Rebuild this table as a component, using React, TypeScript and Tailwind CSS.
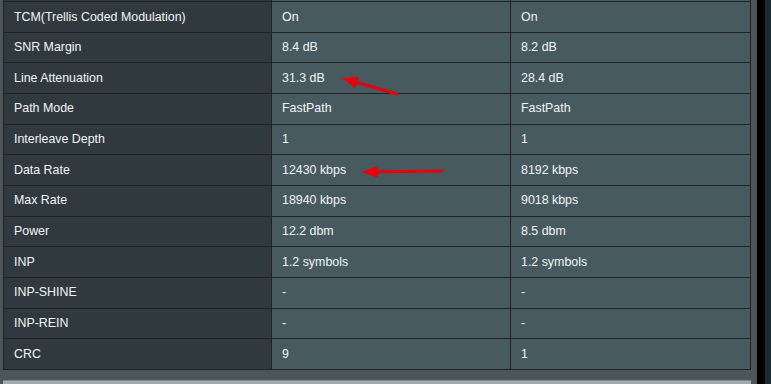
const rows: [string, string, string][] = [
  ['TCM(Trellis Coded Modulation)', 'On', 'On'],
  ['SNR Margin', '8.4 dB', '8.2 dB'],
  ['Line Attenuation', '31.3 dB', '28.4 dB'],
  ['Path Mode', 'FastPath', 'FastPath'],
  ['Interleave Depth', '1', '1'],
  ['Data Rate', '12430 kbps', '8192 kbps'],
  ['Max Rate', '18940 kbps', '9018 kbps'],
  ['Power', '12.2 dbm', '8.5 dbm'],
  ['INP', '1.2 symbols', '1.2 symbols'],
  ['INP-SHINE', '-', '-'],
  ['INP-REIN', '-', '-'],
  ['CRC', '9', '1'],
]

function Arrow({ x1, y1, x2, y2 }: { x1: number; y1: number; x2: number; y2: number }) {
  const ang = Math.atan2(y2 - y1, x2 - x1)
  const len = 16
  const w = 6
  const bx = x2 - Math.cos(ang) * len
  const by = y2 - Math.sin(ang) * len
  const px = -Math.sin(ang) * w
  const py = Math.cos(ang) * w
  return (
    <g>
      <line x1={x1} y1={y1} x2={bx} y2={by} stroke="#e8000b" strokeWidth={3} strokeLinecap="round" />
      <polygon points={`${x2},${y2} ${bx + px},${by + py} ${bx - px},${by - py}`} fill="#e8000b" />
    </g>
  )
}

export default function App() {
  return (
    <div
      className="flex w-[771px] h-[384px] overflow-hidden"
      style={{ fontFamily: '"Liberation Sans", Arial, sans-serif' }}
    >
      <div className="relative w-[757px] h-full bg-[#4c5558]">
        <div className="ml-[3px] w-[748px]">
          <div className="flex h-[1px] border-x border-[#222]">
            <div className="w-[268px] bg-[#2f393e] border-r border-[#222]" />
            <div className="w-[239px] bg-[#475a60] border-r border-[#222]" />
            <div className="flex-1 bg-[#475a60]" />
          </div>
          <div className="border border-b-0 border-[#222]">
            {rows.map(([label, a, b]) => (
              <div key={label} className="flex h-[30.67px] border-b border-[#222] text-[12.4px] text-[#f2f4f5]">
                <div className="w-[268px] flex items-center pl-[10px] bg-[#2f393e] border-r border-[#222]">
                  {label}
                </div>
                <div className="w-[239px] flex items-center pl-[10px] bg-[#475a60] border-r border-[#222]">
                  {a}
                </div>
                <div className="flex-1 flex items-center pl-[10px] bg-[#475a60]">{b}</div>
              </div>
            ))}
          </div>
          <div className="mt-[10px] h-[10px] bg-[#a1aaad] border-t border-[#7f888b]" />
        </div>
        <svg className="absolute inset-0 pointer-events-none" width={757} height={384}>
          <Arrow x1={397} y1={94} x2={342} y2={78} />
          <Arrow x1={442} y1={171} x2={362} y2={172} />
        </svg>
      </div>
      <div className="w-[8px] h-full bg-black" />
      <div className="flex-1 h-full bg-[#1a2932]" />
    </div>
  )
}
